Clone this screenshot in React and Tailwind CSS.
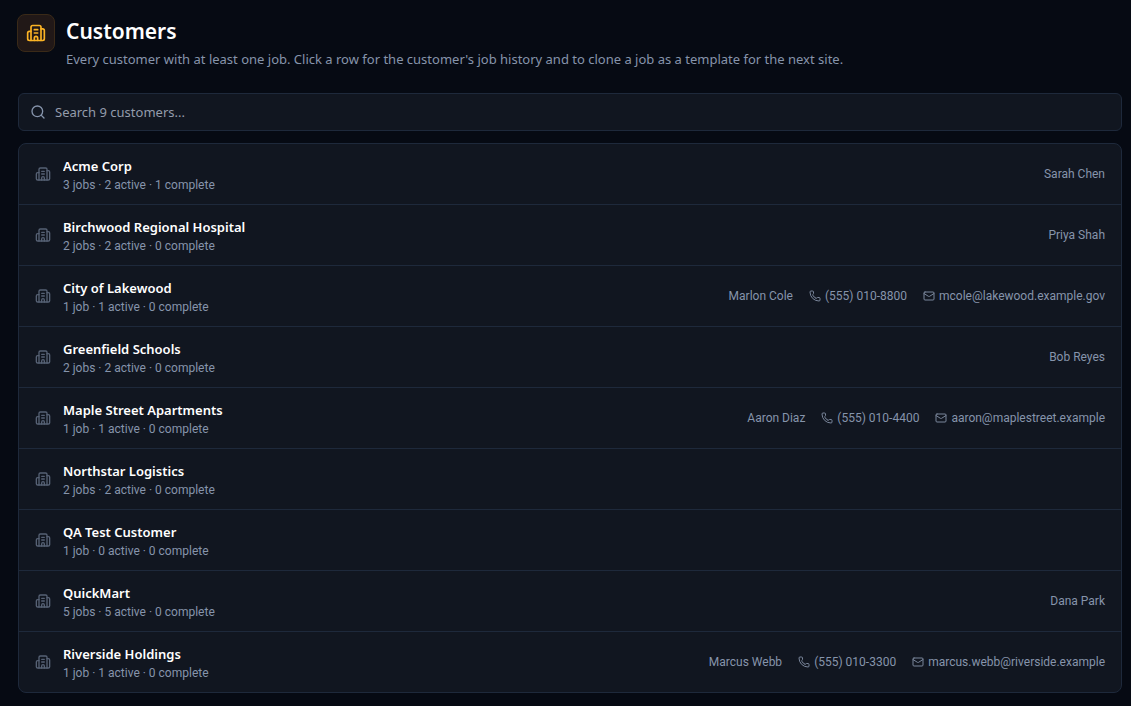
import { useState } from 'react';
import { Building2, Mail, Phone, Search } from 'lucide-react';

const customers = [
    { name: 'Acme Corp', jobs: 3, active: 2, complete: 1, contact: 'Sarah Chen' },
    { name: 'Birchwood Regional Hospital', jobs: 2, active: 2, complete: 0, contact: 'Priya Shah' },
    {
        name: 'City of Lakewood',
        jobs: 1,
        active: 1,
        complete: 0,
        contact: 'Marlon Cole',
        phone: '(555) 010-8800',
        email: 'mcole@lakewood.example.gov',
    },
    { name: 'Greenfield Schools', jobs: 2, active: 2, complete: 0, contact: 'Bob Reyes' },
    {
        name: 'Maple Street Apartments',
        jobs: 1,
        active: 1,
        complete: 0,
        contact: 'Aaron Diaz',
        phone: '(555) 010-4400',
        email: 'aaron@maplestreet.example',
    },
    { name: 'Northstar Logistics', jobs: 2, active: 2, complete: 0 },
    { name: 'QA Test Customer', jobs: 1, active: 0, complete: 0 },
    { name: 'QuickMart', jobs: 5, active: 5, complete: 0, contact: 'Dana Park' },
    {
        name: 'Riverside Holdings',
        jobs: 1,
        active: 1,
        complete: 0,
        contact: 'Marcus Webb',
        phone: '(555) 010-3300',
        email: 'marcus.webb@riverside.example',
    },
];

const CustomerRow = ({ customer }) => (
    <li>
        <button
            type="button"
            className="flex w-full items-center gap-3 px-4 py-[11px] text-left hover:bg-white/5"
        >
            <Building2 className="size-4 shrink-0 text-[#566174]" />
            <span className="min-w-0 flex-1">
                <span className="block truncate text-[13px] leading-[22px] font-semibold text-white">
                    {customer.name}
                </span>
                <span className="block font-['Roboto',sans-serif] text-[12px] leading-4 text-[#8694ab]">
                    {customer.jobs} {customer.jobs === 1 ? 'job' : 'jobs'} · {customer.active} active · {customer.complete} complete
                </span>
            </span>
            <span className="flex shrink-0 items-center gap-4 font-['Roboto',sans-serif] text-[12px] leading-4 text-[#8694ab]">
                {customer.contact && <span>{customer.contact}</span>}
                {customer.phone && (
                    <span className="flex items-center gap-1">
                        <Phone className="size-3 text-[#7a869b]" />
                        {customer.phone}
                    </span>
                )}
                {customer.email && (
                    <span className="flex items-center gap-1">
                        <Mail className="size-3 text-[#7a869b]" />
                        {customer.email}
                    </span>
                )}
            </span>
        </button>
    </li>
);

const CustomersPage = () => {
    const [search, setSearch] = useState('');

    const visible = customers.filter((c) =>
        c.name.toLowerCase().includes(search.trim().toLowerCase())
    );

    return (
        <div className="min-h-screen bg-[#060a13] pb-3 font-['Noto_Sans',sans-serif]">
            <header className="flex items-start gap-[11px] pt-[14px] pr-[9px] pl-[17px]">
                <div className="flex size-[38px] shrink-0 items-center justify-center rounded-lg border border-[#3a2a18] bg-[#211817]">
                    <Building2 className="size-5 text-[#fbb324]" />
                </div>
                <div>
                    <h1 className="text-[21px] leading-[34px] font-semibold text-white">Customers</h1>
                    <p className="mt-px text-[13px] leading-5 text-[#8694ab]">
                        Every customer with at least one job. Click a row for the customer's job history and to clone a job as a template for the next site.
                    </p>
                </div>
            </header>

            <main className="pt-6 pr-[9px] pl-[18px]">
                {/* Search */}
                <label className="flex h-[38px] items-center gap-[9px] rounded-md border border-[#1e293b] bg-[#111620] px-[11px]">
                    <Search className="size-4 shrink-0 text-[#8694ab]" />
                    <input
                        type="text"
                        aria-label="Search customers"
                        className="w-full bg-transparent text-[13px] leading-5 text-white placeholder:text-[#949cab] focus:outline-none"
                        placeholder={`Search ${customers.length} customers...`}
                        value={search}
                        onChange={(e) => setSearch(e.target.value)}
                    />
                </label>

                {/* Customer list */}
                <ul className="mt-3 divide-y divide-[#1e293b] overflow-hidden rounded-lg border border-[#1e293b] bg-[#111620]">
                    {visible.map((customer) => (
                        <CustomerRow key={customer.name} customer={customer} />
                    ))}
                </ul>
            </main>
        </div>
    );
};

export default CustomersPage;
